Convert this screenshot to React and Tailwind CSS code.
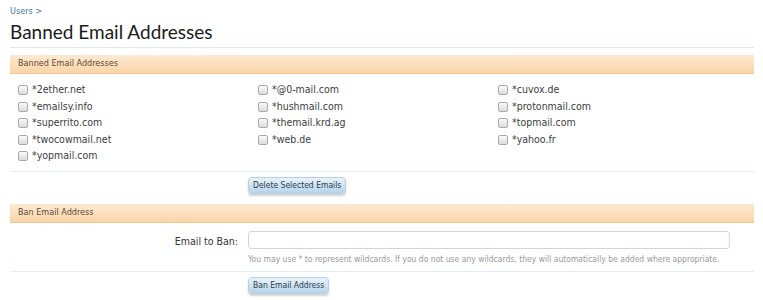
const EMAILS = [
  "*2ether.net",
  "*@0-mail.com",
  "*cuvox.de",
  "*emailsy.info",
  "*hushmail.com",
  "*protonmail.com",
  "*superrito.com",
  "*themail.krd.ag",
  "*topmail.com",
  "*twocowmail.net",
  "*web.de",
  "*yahoo.fr",
  "*yopmail.com",
];

function SectionHeader({ children }) {
  return (
    <div className="h-[19px] flex items-center px-2 text-[9px] text-[#5e4a36] bg-gradient-to-b from-[#fde9d2] to-[#f9d5a8] border-b border-[#f3c58c]">
      {children}
    </div>
  );
}

function Box() {
  return (
    <span className="w-[10px] h-[10px] rounded-[2px] border border-[#a9a9a9] bg-gradient-to-b from-[#fafafa] to-[#dcdcdc] shrink-0" />
  );
}

function Button({ children }) {
  return (
    <button className="h-[17px] px-[4px] text-[8.5px] leading-none text-[#2b3c4d] rounded-[4px] border border-[#b8cfe0] bg-gradient-to-b from-[#e9f3fb] to-[#b6d3ea] shadow-[0_2px_2px_rgba(0,0,0,0.18)]">
      {children}
    </button>
  );
}

export default function App() {
  return (
    <div className="w-[763px] h-[300px] overflow-hidden bg-white px-[10px] font-['DejaVu_Sans_Condensed','DejaVu_Sans',sans-serif]">
      <div className="pt-[5px] text-[9px] leading-[12px] text-[#3a76a8]">Users &gt;</div>
      <h1 className="mt-[3px] text-[19px] leading-[24px] text-[#1b1b1b] font-['Lato',sans-serif]">
        Banned Email Addresses
      </h1>
      <div className="mt-[3px] h-px bg-[#dbe9f1] w-[744px]" />
      <div className="mt-[7px] w-[744px]">
        <SectionHeader>Banned Email Addresses</SectionHeader>
        <div className="grid grid-cols-[240px_240px_240px] pl-[8px] pt-[10px] pb-[8px] gap-y-[4px]">
          {EMAILS.map((e) => (
            <label key={e} className="flex items-center gap-[4px] h-[12.5px] text-[10.5px] text-[#3c3c3c]">
              <Box />
              <span>{e}</span>
            </label>
          ))}
        </div>
        <div className="h-px bg-[#e3eef4]" />
        <div className="flex pl-[238px] pt-[5px] pb-[10px]">
          <Button>Delete Selected Emails</Button>
        </div>
        <SectionHeader>Ban Email Address</SectionHeader>
        <div className="flex pt-[8px]">
          <div className="w-[232px] text-right pr-[4px] pt-[3px] text-[10.5px] text-[#333]">Email to Ban:</div>
          <div className="pl-[6px]">
            <div className="w-[482px] h-[18px] rounded-[3px] border border-[#cfd5da] bg-white" />
            <div className="mt-[4px] text-[8.5px] leading-[12px] text-[#9a9a9a]">
              You may use * to represent wildcards. If you do not use any wildcards, they will automatically be added where appropriate.
            </div>
          </div>
        </div>
        <div className="mt-[6px] h-px bg-[#e3eef4]" />
        <div className="flex pl-[238px] pt-[5px]">
          <Button>Ban Email Address</Button>
        </div>
      </div>
    </div>
  );
}
